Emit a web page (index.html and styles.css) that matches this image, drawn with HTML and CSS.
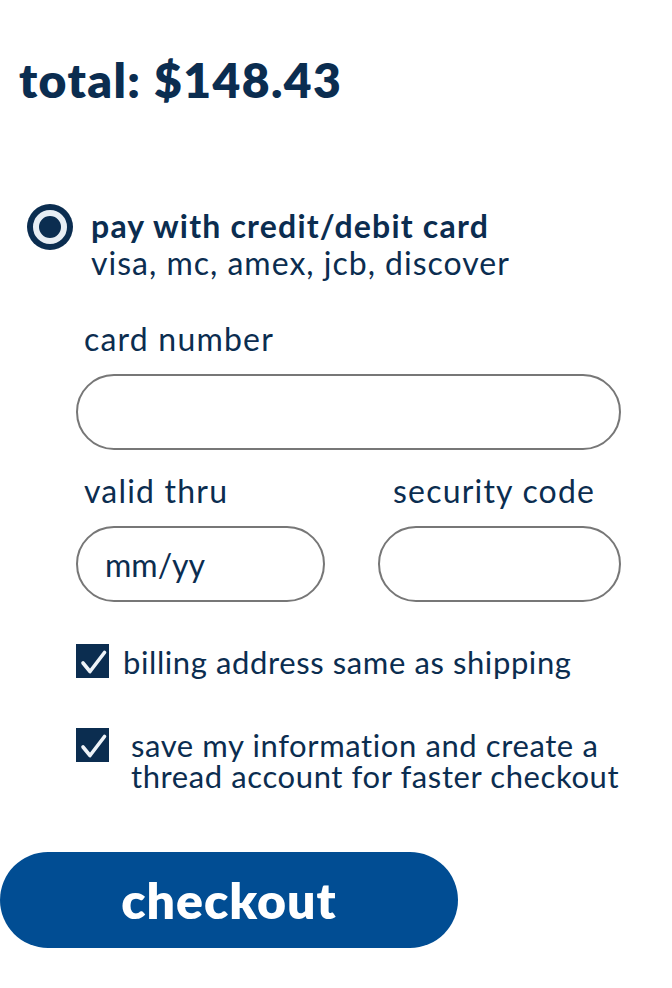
FILE: index.html
```html
<!DOCTYPE html>
<html>
<head>
<meta charset="utf-8">
<link rel="stylesheet" href="styles.css">
</head>
<body>
<main class="page">
  <h1 class="total">total: $148.43</h1>

  <section class="method">
    <span class="radio"><span class="radio-dot"></span></span>
    <div class="method-text">
      <div class="method-title">pay with credit/debit card</div>
      <div class="method-sub">visa, mc, amex, jcb, discover</div>
    </div>
  </section>

  <section class="form">
    <label class="label">card number</label>
    <div class="input"></div>

    <div class="row">
      <div class="col">
        <label class="label">valid thru</label>
        <div class="input"><span class="placeholder">mm/yy</span></div>
      </div>
      <div class="col">
        <label class="label label-right">security code</label>
        <div class="input"></div>
      </div>
    </div>

    <div class="check check-one">
      <span class="box"><svg viewBox="0 0 33 34" width="33" height="34"><path d="M7 19 L14 27.5 L28.5 8.5" fill="none" stroke="#eef3f8" stroke-width="3.6" stroke-linecap="round" stroke-linejoin="round"/></svg></span>
      <span class="check-text">billing address same as shipping</span>
    </div>

    <div class="check check-two">
      <span class="box"><svg viewBox="0 0 33 34" width="33" height="34"><path d="M7 19 L14 27.5 L28.5 8.5" fill="none" stroke="#eef3f8" stroke-width="3.6" stroke-linecap="round" stroke-linejoin="round"/></svg></span>
      <span class="check-text check-text-two">save my information and create a<br>thread account for faster checkout</span>
    </div>
  </section>

  <button class="checkout">checkout</button>
</main>
</body>
</html>
```

FILE: styles.css
```css
* { box-sizing: border-box; }

body {
  margin: 0;
  background: #ffffff;
  font-family: "Lato", "Open Sans", sans-serif;
  color: #0b2d50;
}

.page {
  width: 672px;
  display: flex;
  flex-direction: column;
}

.total {
  margin: 52px 0 0 19px;
  font-size: 48px;
  line-height: 56px;
  font-weight: 800;
  letter-spacing: 1.4px;
}

.method {
  display: flex;
  align-items: flex-start;
  margin-top: 97px;
  padding-left: 27px;
}

.radio {
  width: 46px;
  height: 46px;
  border-radius: 50%;
  background: #0b2d50;
  padding: 6px;
  flex: none;
  display: block;
  margin-top: -1px;
}

.radio-dot {
  display: block;
  width: 34px;
  height: 34px;
  border-radius: 50%;
  background: #0b2d50;
  border: 6px solid #e8eef4;
}

.method-text {
  margin-left: 18px;
  margin-top: 2px;
  font-size: 32px;
  line-height: 37px;
}

.method-title {
  font-weight: 700;
  letter-spacing: 1.2px;
}

.method-sub {
  letter-spacing: 1px;
}

.form {
  display: flex;
  flex-direction: column;
  padding: 0 51px 0 76px;
  margin-top: 39px;
}

.label {
  font-size: 32px;
  line-height: 37px;
  padding-left: 8px;
  display: block;
  letter-spacing: 1.2px;
}

.label-right {
  padding-left: 15px;
}

.input {
  height: 76px;
  border: 2px solid #777777;
  border-radius: 38px;
  margin-top: 17px;
  display: flex;
  align-items: center;
  padding-left: 27px;
}

.placeholder {
  font-size: 32px;
  line-height: 37px;
  color: #0b2d50;
}

.row {
  display: grid;
  grid-template-columns: 249px 243px;
  column-gap: 53px;
  margin-top: 22px;
}

.check {
  display: flex;
  align-items: flex-start;
}

.check-one {
  margin-top: 42px;
}

.check-two {
  margin-top: 50px;
}

.box {
  width: 33px;
  height: 34px;
  background: #0b2d50;
  flex: none;
  display: block;
}

.box svg { display: block; }

.check-text {
  font-size: 31px;
  line-height: 31px;
  letter-spacing: 0.6px;
  margin-left: 14px;
  margin-top: 3px;
}

.check-text-two {
  margin-left: 22px;
  margin-top: 2px;
}

.checkout {
  margin-top: 60px;
  width: 458px;
  height: 96px;
  border: none;
  border-radius: 48px;
  background: #014d93;
  color: #ffffff;
  font-family: "Lato", "Open Sans", sans-serif;
  font-size: 50px;
  font-weight: 800;
  letter-spacing: 1px;
  padding: 0;
}
```
